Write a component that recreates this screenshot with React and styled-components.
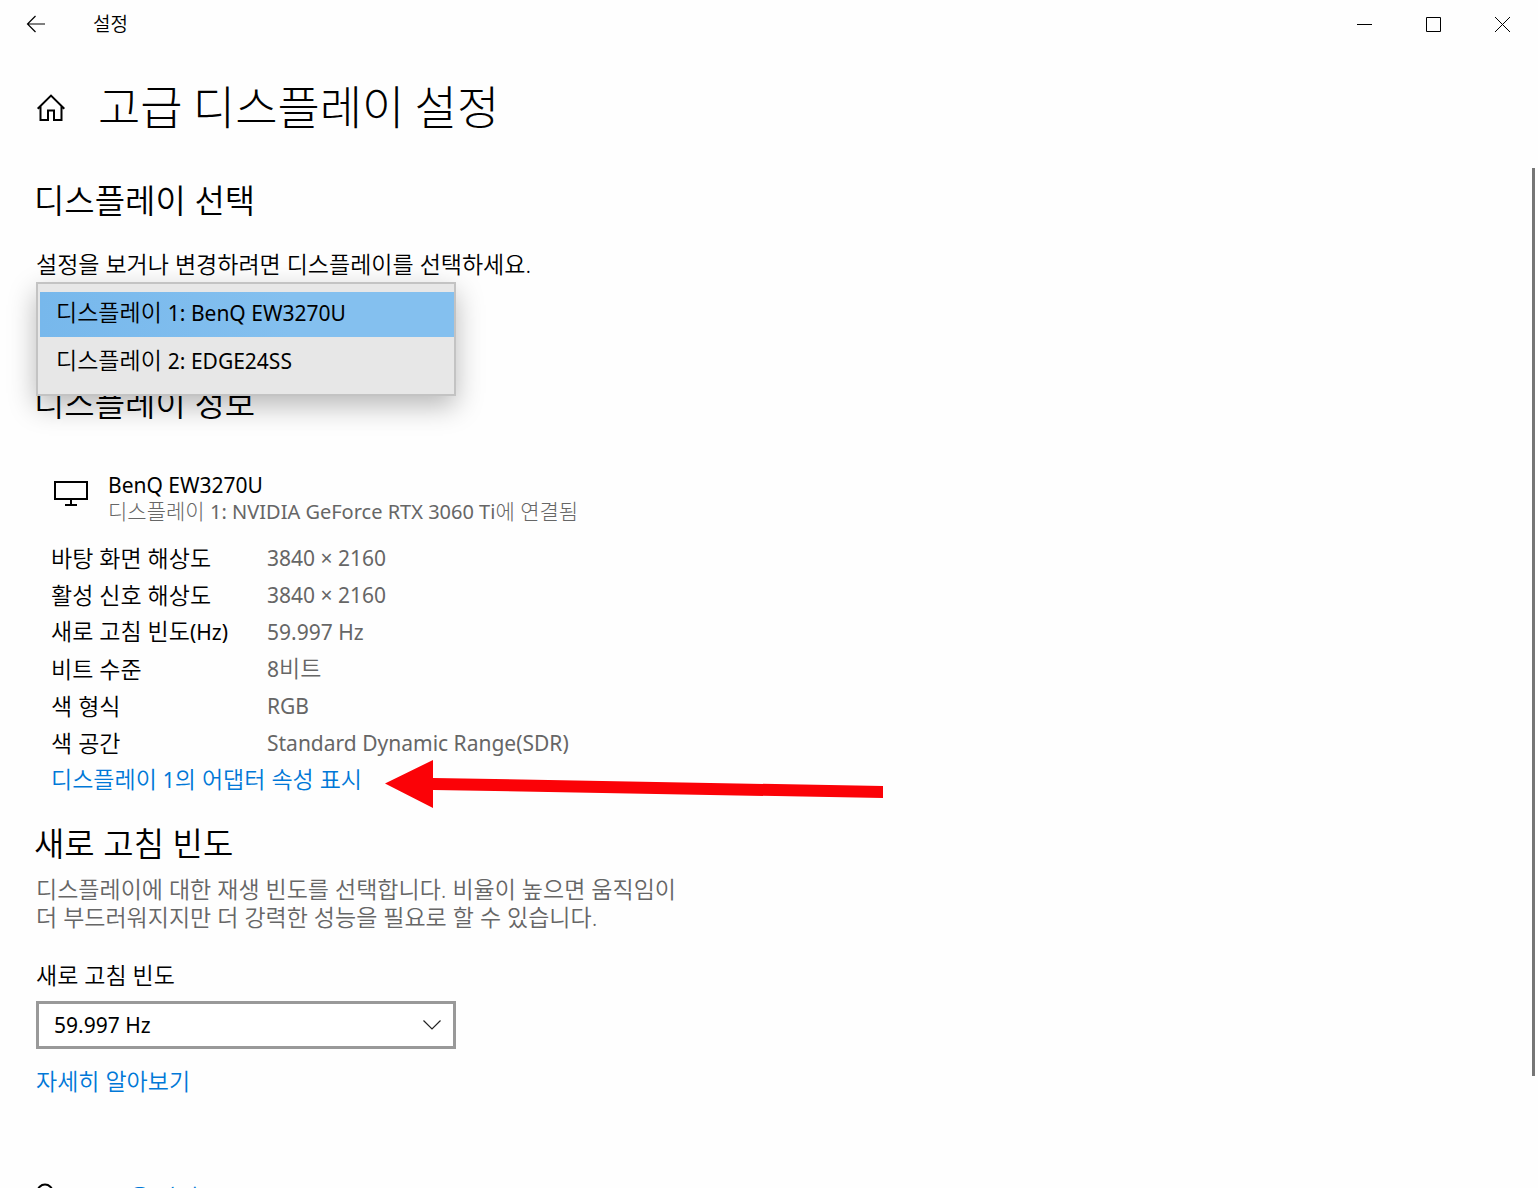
import React from "react";
import styled, { createGlobalStyle } from "styled-components";

const GlobalStyle = createGlobalStyle`
  *, *::before, *::after { box-sizing: border-box; }
  html, body, #root { height: 100%; }
  body {
    margin: 0;
    background: #fefefe;
    color: #000;
    font-family: "Noto Sans", "Noto Sans CJK KR", sans-serif;
    font-size: 23px;
    font-weight: 350;
    line-height: 28px;
  }
  h1, h2, p, dl, dd, dt, ul { margin: 0; padding: 0; font-weight: inherit; }
`;

const Window = styled.div`
  display: flex;
  flex-direction: column;
  height: 100vh;
  overflow: hidden;
`;

const TitleBar = styled.header`
  display: flex;
  align-items: center;
  height: 48px;
  padding-right: 1px;
  flex: none;
`;

const BarButton = styled.button`
  display: flex;
  align-items: center;
  justify-content: center;
  width: ${(p) => p.$width}px;
  height: 48px;
  padding: 0;
  border: 0;
  background: none;
  color: #000;
`;

const AppName = styled.span`
  flex: 1;
  padding-left: 21px;
  font-size: 19px;
`;

const PageHead = styled.div`
  display: flex;
  align-items: center;
  gap: 32px;
  height: 120px;
  padding-left: 36px;
  flex: none;
`;

const HomeButton = styled.button`
  display: flex;
  width: 30px;
  height: 30px;
  padding: 0;
  border: 0;
  background: none;
`;

const PageTitle = styled.h1`
  padding-bottom: 8px;
  font-family: "Noto Sans CJK KR", sans-serif;
  font-size: 46px;
  font-weight: 300;
  line-height: 60px;
`;

const Body = styled.div`
  display: flex;
  flex: 1;
  min-height: 0;
`;

const Content = styled.main`
  flex: 1;
  min-width: 0;
  padding: 11px 36px 0;
  overflow: hidden;
`;

const ScrollTrack = styled.div`
  width: 6px;
  flex: none;
`;

const ScrollThumb = styled.div`
  width: 3px;
  height: 89%;
  background: #767676;
`;

const SectionTitle = styled.h2`
  margin-left: -2px;
  font-size: 33px;
  line-height: 44px;
`;

const PickerBlock = styled.div`
  position: relative;
  height: 159px;
  padding-top: 27px;
`;

const Dropdown = styled.ul`
  position: absolute;
  top: 59px;
  left: 0;
  width: 420px;
  padding: 8px 0 6px 2px;
  border: 2px solid #c3c3c3;
  background: #e7e7e7;
  box-shadow: 0 10px 26px rgba(0, 0, 0, 0.28);
  list-style: none;
`;

const Option = styled.li`
  height: 48px;
  padding: 6px 16px;
`;

const OptionActive = styled(Option)`
  height: 45px;
  margin-bottom: 3px;
  background: linear-gradient(90deg, #77b8ec, #84c0ef 60%);
`;

const Latin = styled.span`
  font-size: ${(p) => p.$size || 21}px;
  font-weight: 400;
`;

const Monitor = styled.div`
  display: flex;
  align-items: flex-start;
  gap: 19px;
  padding: 46px 0 0 17px;

  svg {
    flex: none;
    margin-top: 7px;
  }
`;

const MonitorText = styled.div`
  display: flex;
  flex-direction: column;
  line-height: 26px;
`;

const MonitorNote = styled.span`
  color: #666;
  font-size: 21px;
  font-weight: 300;
`;

const Specs = styled.dl`
  display: grid;
  grid-template-columns: 216px 1fr;
  grid-auto-rows: 37px;
  align-items: center;
  padding: 14px 0 0 15px;
`;

const SpecValue = styled.dd`
  color: #666;
`;

const Link = styled.a`
  color: #0078d7;
  text-decoration: none;
`;

const AdapterRow = styled.div`
  display: flex;
  align-items: center;
  height: 37px;
  padding-left: 15px;
`;

const ArrowAnchor = styled.span`
  position: relative;
  width: 0;
  height: 48px;

  svg {
    position: absolute;
    left: 23px;
    top: 4px;
  }
`;

const RateSection = styled.section`
  padding-top: 24px;
`;

const RateHelp = styled.p`
  max-width: 660px;
  padding-top: 9px;
  color: #666;
`;

const FieldLabel = styled.label`
  display: block;
  padding: 30px 0 12px;
`;

const SelectBox = styled.div`
  position: relative;
  width: 420px;

  svg {
    position: absolute;
    right: 15px;
    top: 18px;
    pointer-events: none;
  }
`;

const Select = styled.select`
  display: block;
  width: 100%;
  height: 48px;
  padding: 0 15px;
  border: 3px solid #999;
  border-radius: 0;
  background: #fff;
  color: #000;
  font: inherit;
  font-size: 21px;
  font-weight: 400;
  appearance: none;
`;

const LearnMore = styled.div`
  padding-top: 18px;
`;

const HelpRow = styled.div`
  display: flex;
  align-items: flex-start;
  gap: 54px;
  padding-top: 88px;

  svg {
    flex: none;
  }
`;

/* Latin runs are set a little smaller than the Hangul around them. */
function Mixed({ text, size }) {
  return text
    .split(/([!-~×][ -~×]*)/)
    .filter(Boolean)
    .map((run, i) => (/^[!-~×]/.test(run) ? <Latin key={i} $size={size}>{run}</Latin> : run));
}

const specs = [
  ["바탕 화면 해상도", "3840 × 2160"],
  ["활성 신호 해상도", "3840 × 2160"],
  ["새로 고침 빈도(Hz)", "59.997 Hz"],
  ["비트 수준", "8비트"],
  ["색 형식", "RGB"],
  ["색 공간", "Standard Dynamic Range(SDR)"],
];

export default function App() {
  return (
    <Window>
      <GlobalStyle />
      <TitleBar>
        <BarButton $width={72} aria-label="뒤로">
          <svg width="20" height="18" viewBox="0 0 20 18" fill="none" stroke="#000" strokeWidth="1.2">
            <path d="M19 9H1.5M9.5 1L1.5 9l8 8" />
          </svg>
        </BarButton>
        <AppName>설정</AppName>
        <BarButton $width={69} aria-label="최소화">
          <svg width="15" height="15" viewBox="0 0 15 15"><path d="M0 7.5h15" stroke="#000" /></svg>
        </BarButton>
        <BarButton $width={69} aria-label="최대화">
          <svg width="15" height="15" viewBox="0 0 15 15"><path d="M.5 .5h14v14H.5z" fill="none" stroke="#000" /></svg>
        </BarButton>
        <BarButton $width={69} aria-label="닫기">
          <svg width="15" height="15" viewBox="0 0 15 15"><path d="M0 0l15 15M15 0L0 15" stroke="#000" /></svg>
        </BarButton>
      </TitleBar>
      <PageHead>
        <HomeButton aria-label="홈">
          <svg width="30" height="30" viewBox="0 0 30 30" fill="none" stroke="#000" strokeWidth="2">
            <path d="M1.7 15.7L15 2.6l13.3 13.1M4.5 13.5V27H12V17.5h6V27h7.5V13.5" />
          </svg>
        </HomeButton>
        <PageTitle>고급 디스플레이 설정</PageTitle>
      </PageHead>
      <Body>
        <Content>
          <SectionTitle>디스플레이 선택</SectionTitle>
          <PickerBlock>
            <p id="display-label">설정을 보거나 변경하려면 디스플레이를 선택하세요.</p>
            <Dropdown role="listbox" aria-labelledby="display-label">
              <OptionActive role="option" aria-selected="true"><Mixed text="디스플레이 1: BenQ EW3270U" /></OptionActive>
              <Option role="option" aria-selected="false"><Mixed text="디스플레이 2: EDGE24SS" /></Option>
            </Dropdown>
          </PickerBlock>
          <SectionTitle>디스플레이 정보</SectionTitle>
          <Monitor>
            <svg width="36" height="28" viewBox="0 0 36 28" fill="none" stroke="#000" strokeWidth="2">
              <path d="M2 3h32v17H2zM18 20v5M12 26h12" />
            </svg>
            <MonitorText>
              <Latin>BenQ EW3270U</Latin>
              <MonitorNote><Mixed text="디스플레이 1: NVIDIA GeForce RTX 3060 Ti에 연결됨" size={20} /></MonitorNote>
            </MonitorText>
          </Monitor>
          <Specs>
            {specs.map(([name, value]) => (
              <React.Fragment key={name}>
                <dt><Mixed text={name} /></dt>
                <SpecValue><Mixed text={value} /></SpecValue>
              </React.Fragment>
            ))}
          </Specs>
          <AdapterRow>
            <Link href="#adapter"><Mixed text="디스플레이 1의 어댑터 속성 표시" /></Link>
            <ArrowAnchor aria-hidden="true">
              <svg width="500" height="48" viewBox="0 0 500 48">
                <path d="M0 23.5L48 0V18L498 26V38L48 30V48z" fill="#fb0207" />
              </svg>
            </ArrowAnchor>
          </AdapterRow>
          <RateSection>
            <SectionTitle>새로 고침 빈도</SectionTitle>
            <RateHelp>디스플레이에 대한 재생 빈도를 선택합니다. 비율이 높으면 움직임이 더 부드러워지지만 더 강력한 성능을 필요로 할 수 있습니다.</RateHelp>
            <FieldLabel htmlFor="rate">새로 고침 빈도</FieldLabel>
            <SelectBox>
              <Select id="rate" defaultValue="59.997">
                <option value="59.997">59.997 Hz</option>
              </Select>
              <svg width="18" height="12" viewBox="0 0 18 12" fill="none" stroke="#222" strokeWidth="1.2">
                <path d="M.5 1.5L9 10l8.5-8.5" />
              </svg>
            </SelectBox>
            <LearnMore><Link href="#more">자세히 알아보기</Link></LearnMore>
          </RateSection>
          <HelpRow>
            <svg width="18" height="24" viewBox="0 0 18 24" fill="none" stroke="#000" strokeWidth="2">
              <circle cx="9" cy="9" r="7.5" />
            </svg>
            <Link href="#help">도움 받기</Link>
          </HelpRow>
        </Content>
        <ScrollTrack><ScrollThumb /></ScrollTrack>
      </Body>
    </Window>
  );
}
